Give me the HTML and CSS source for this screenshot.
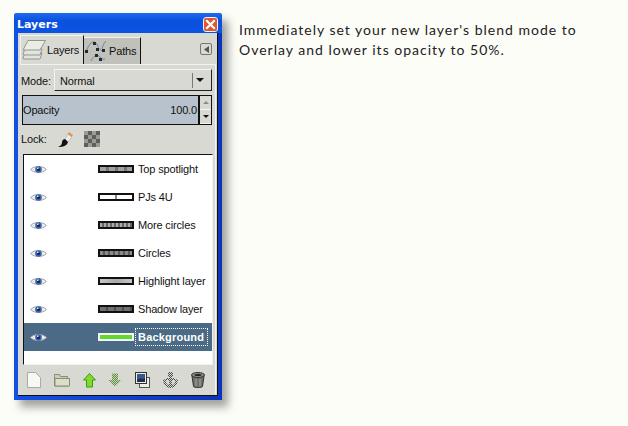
FILE: index.html
```html
<!DOCTYPE html>
<html lang="en">
<head>
<meta charset="utf-8">
<title>Layers</title>
<link rel="stylesheet" href="styles.css">
</head>
<body>
<svg class="defs" width="0" height="0" aria-hidden="true"><defs>
  <pattern id="dither" width="2" height="2" patternUnits="userSpaceOnUse"><rect width="2" height="2" fill="#d8d9d3"/><rect width="1" height="1" fill="#4c4d4a"/><rect x="1" y="1" width="1" height="1" fill="#4c4d4a"/></pattern>
  <pattern id="dither-green" width="2" height="2" patternUnits="userSpaceOnUse"><rect width="2" height="2" fill="#c8d4ba"/><rect width="1" height="1" fill="#5f8f45"/><rect x="1" y="1" width="1" height="1" fill="#5f8f45"/></pattern>
  <g id="eye-shape"><path d="M.5 5.500C4 1.500 13 1.500 16.500 5.500 13 9.500 4 9.500 .5 5.500z" fill="#e9ebee" stroke="#a4a8ae"/><circle cx="8.500" cy="5.500" r="3.300" fill="#3a62ac"/><circle cx="8.500" cy="5.500" r="1.500" fill="#12234a"/><rect x="7" y="3.500" width="1.500" height="1.500" fill="#d5e3ff"/></g>
</defs></svg>
<main class="page">
  <section class="window">
    <header class="titlebar">
      <span class="title">Layers</span>
      <span class="close"><svg width="13" height="13" viewBox="0 0 13 13"><path d="M3 3l7 7M10 3l-7 7" stroke="#fff" stroke-width="2.200" stroke-linecap="square"/></svg></span>
    </header>
    <div class="client">
      <div class="tabs">
        <div class="tab tab-active">
          <svg width="24" height="20" viewBox="0 0 24 20"><g fill="#e4e4de" stroke="#93958f"><path d="M3 13h17l-2 6H1.500L1 18z"/><path d="M3 9h17l-2 6H1.500L1 14z"/><path d="M6 .5h17.500L18 10H1z" fill="#ecece7"/></g></svg>
          <span>Layers</span>
        </div>
        <div class="tab tab-idle">
          <svg width="24" height="24" viewBox="0 0 24 24"><path d="M1 13C4 4 8 1 11 4s1 6 7 8M6 22c2-5 6-7 8-5s4 4 6 3M17 10c1-4 2-6 4-8" fill="none" stroke="#6b86ad"/><g fill="#26282c"><rect x="0" y="11" width="3" height="3"/><rect x="8" y="3" width="3" height="3"/><rect x="11" y="9" width="3" height="3"/><rect x="17" y="10" width="3" height="3"/><rect x="10" y="15" width="3" height="3"/><rect x="14" y="19" width="3" height="3"/></g></svg>
          <span>Paths</span>
        </div>
        <button class="menu-btn" aria-label="Menu"><svg width="7" height="7" viewBox="0 0 7 7"><path d="M6 0v7L1 3.500z" fill="#555"/></svg></button>
      </div>
      <div class="panel">
        <div class="mode-row">
          <span class="label">Mode:</span>
          <div class="combo"><span class="combo-value">Normal</span><span class="combo-arrow"></span></div>
        </div>
        <div class="opacity-row">
          <div class="opacity"><span>Opacity</span><span>100.0</span></div>
          <div class="spin"><span class="spin-btn spin-up"></span><span class="spin-btn spin-down"></span></div>
        </div>
        <div class="lock-row">
          <span class="label">Lock:</span>
          <svg class="brush" width="17" height="17" viewBox="0 0 17 17"><path d="M10 3l4 3-4 5-3-3z" fill="#ecece8" stroke="#a0a09a" stroke-width=".5"/><path d="M11 1l4 3-1.500 2-4-3z" fill="#d99a5e"/><path d="M7 8l3 3c-1 4-5 5-10 5 3-1 4-3 4-5s2-3 3-3z" fill="#111"/></svg>
          <span class="checker"></span>
        </div>
        <ul class="layers">
          <li class="layer"><svg class="eye" width="17" height="11" viewBox="0 0 17 11"><use href="#eye-shape"/></svg><span class="thumb thumb-dark"></span><span class="name">Top spotlight</span></li>
          <li class="layer"><svg class="eye" width="17" height="11" viewBox="0 0 17 11"><use href="#eye-shape"/></svg><span class="thumb thumb-white"></span><span class="name">PJs 4U</span></li>
          <li class="layer"><svg class="eye" width="17" height="11" viewBox="0 0 17 11"><use href="#eye-shape"/></svg><span class="thumb thumb-dots"></span><span class="name">More circles</span></li>
          <li class="layer"><svg class="eye" width="17" height="11" viewBox="0 0 17 11"><use href="#eye-shape"/></svg><span class="thumb thumb-mid"></span><span class="name">Circles</span></li>
          <li class="layer"><svg class="eye" width="17" height="11" viewBox="0 0 17 11"><use href="#eye-shape"/></svg><span class="thumb thumb-light"></span><span class="name">Highlight layer</span></li>
          <li class="layer"><svg class="eye" width="17" height="11" viewBox="0 0 17 11"><use href="#eye-shape"/></svg><span class="thumb thumb-shadow"></span><span class="name">Shadow layer</span></li>
          <li class="layer layer-selected"><svg class="eye" width="17" height="11" viewBox="0 0 17 11"><use href="#eye-shape"/></svg><span class="thumb thumb-green"></span><span class="name">Background</span></li>
        </ul>
        <div class="toolbar">
          <svg width="14" height="16" viewBox="0 0 14 16"><path d="M.5.500h8l5 5v10H.5z" fill="#f7f7f3" stroke="#a9aaa4"/></svg>
          <svg width="16" height="14" viewBox="0 0 16 14"><path d="M.5 13V1.500h5l1 2h7v2h2l-1 7.500z" fill="#cdcfb4" stroke="#8a8c78"/><path d="M1 5.500h14.500V13H1z" fill="#dcdec6" stroke="#8a8c78"/></svg>
          <svg width="13" height="15" viewBox="0 0 13 15"><path d="M6.500.5l6 6.500H9.500v7h-6V7H.5z" fill="#7fd92f" stroke="#3f9a10"/></svg>
          <svg width="14" height="14" viewBox="0 0 14 14"><path d="M4 .5h6V7h3.500L7 13.500.5 7H4z" fill="url(#dither-green)"/></svg>
          <svg width="15" height="16" viewBox="0 0 15 16"><rect x="4.500" y="5.500" width="10" height="10" fill="#ecece8" stroke="#555"/><rect x=".5" y=".5" width="11" height="11" fill="#ecece8" stroke="#333"/><rect x="2" y="2" width="8" height="8" fill="#3a5a8c"/><path d="M2 8l3-2 2 1 3-1v4H2z" fill="#1e2f4f"/></svg>
          <svg width="15" height="16" viewBox="0 0 15 16"><path d="M5 0h5v4H9v2h3v2H9v5c2 0 3-2 3-4l-1-1 4-1c0 5-3 9-7.500 9S0 12 0 7l4 1-1 1c0 2 1 4 3 4V8H3V6h3V4H5z" fill="url(#dither)"/></svg>
          <svg width="14" height="16" viewBox="0 0 14 16"><path d="M1 4l1.500 10.500c1 1.500 8 1.500 9 0L13 4z" fill="#6f706c" stroke="#333"/><path d="M5 7v7M9 7v7" stroke="#a8a8a4"/><ellipse cx="7" cy="3" rx="6.500" ry="2.500" fill="#8a8b87" stroke="#333"/><ellipse cx="7" cy="3" rx="3.500" ry="1" fill="#222"/></svg>
        </div>
      </div>
    </div>
  </section>
  <p class="note">Immediately set your new layer's blend mode to<br>Overlay and lower its opacity to 50%.</p>
</main>
</body>
</html>
```
FILE: styles.css
```css
* { box-sizing: border-box; }
html, body { margin: 0; padding: 0; }
body {
  width: 628px;
  height: 426px;
  overflow: hidden;
  background: #fdfdf8;
  font-family: "Liberation Sans", sans-serif;
  font-size: 11px;
  letter-spacing: -.15px;
  color: #111;
}
.page {
  display: flex;
  align-items: flex-start;
  padding: 13px 0 0 14px;
  gap: 17px;
}
.window {
  width: 208px;
  height: 387px;
  flex: none;
  display: flex;
  flex-direction: column;
  background: linear-gradient(90deg, #1450e4, #0c34b8);
  border-radius: 3px 3px 0 0;
  box-shadow: 6px 7px 8px rgba(70, 70, 70, .5);
}
.titlebar {
  height: 20px;
  flex: none;
  display: flex;
  align-items: center;
  justify-content: space-between;
  padding: 2px 5px 0 3px;
  background: linear-gradient(#1f6cf0, #0a50dc 40%, #0b55e4);
  border-radius: 3px 3px 0 0;
}
.title {
  font-family: "DejaVu Sans", sans-serif;
  font-weight: 700;
  font-size: 11px;
  letter-spacing: 0;
  color: #fff;
}
.close {
  width: 13px;
  height: 13px;
  display: flex;
  background: #e2562f;
  border-radius: 2px;
  outline: 1px solid #f4f4f4;
}
.client {
  flex: 1;
  margin: 0 4px 4px;
  padding: 2px 1px 0 2px;
  display: flex;
  flex-direction: column;
  background: #d8d9d3;
  border-right: 1px solid #111;
  border-bottom: 1px solid #111;
}
.tabs {
  height: 29px;
  flex: none;
  display: flex;
  align-items: flex-end;
}
.tab {
  display: flex;
  align-items: center;
  border-top: 1px solid #f2f2ee;
  border-right: 1px solid #111;
}
.tab-active {
  width: 64px;
  height: 29px;
  gap: 1px;
  padding: 0 0 0 1px;
  border-left: 1px solid #f2f2ee;
}
.tab-idle {
  width: 57px;
  height: 27px;
  gap: 0;
  padding-left: 1px;
  background: #c0c1ba;
}
.menu-btn {
  width: 12px;
  height: 12px;
  margin: 0 4px 9px auto;
  padding: 0;
  display: flex;
  align-items: center;
  justify-content: center;
  background: #d8d9d3;
  border: 1px solid #77786f;
  border-radius: 2px;
}
.panel {
  flex: 1;
  display: flex;
  flex-direction: column;
  padding: 4px 3px 0 1px;
  border-top: 1px solid #f2f2ee;
  border-right: 1px solid #f2f2ee;
}
.mode-row {
  height: 22px;
  flex: none;
  display: flex;
  align-items: center;
  gap: 3px;
}
.label { width: 30px; flex: none; }
.mode-row .label, .combo-value { padding-top: 2px; }
.combo {
  flex: 1;
  height: 22px;
  display: flex;
  align-items: center;
  justify-content: space-between;
  padding-left: 5px;
  background: #d8d9d3;
  border-top: 1px solid #f4f4f0;
  border-left: 1px solid #f4f4f0;
  border-right: 1px solid #222;
  border-bottom: 1px solid #222;
}
.combo-arrow {
  width: 19px;
  height: 15px;
  display: flex;
  border-left: 1px solid #777;
}
.combo-arrow::after {
  content: "";
  margin: 5px 0 0 3px;
  width: 0;
  height: 0;
  border-left: 4px solid transparent;
  border-right: 4px solid transparent;
  border-top: 4px solid #111;
}
.opacity-row {
  height: 30px;
  flex: none;
  margin: 4px 0 0 1px;
  display: flex;
}
.opacity {
  flex: 1;
  display: flex;
  align-items: center;
  justify-content: space-between;
  padding: 0 1px 0 0;
  background: #b8c2cc;
  border: 1px solid #111;
  border-right-width: 2px;
}
.spin {
  width: 12px;
  flex: none;
  display: flex;
  flex-direction: column;
  background: #d8d9d3;
  border: 1px solid #111;
  border-left: 0;
}
.spin-btn {
  flex: 1;
  display: flex;
  align-items: center;
  justify-content: center;
  border-bottom: 1px solid #f4f4f0;
}
.spin-btn::after {
  content: "";
  border-left: 3px solid transparent;
  border-right: 3px solid transparent;
}
.spin-up::after { border-bottom: 3px solid #8a8b85; }
.spin-down::after { border-top: 3px solid #111; }
.lock-row {
  height: 22px;
  flex: none;
  margin-top: 3px;
  display: flex;
  align-items: center;
}
.lock-row .label { width: 37px; }
.checker {
  width: 16px;
  height: 16px;
  margin-left: 9px;
  background: repeating-conic-gradient(#5e5f5c 0 25%, #9a9b97 0 50%) 0 0 / 8px 8px;
}
.layers {
  list-style: none;
  width: 190px;
  height: 211px;
  flex: none;
  margin: 4px 0 0 2px;
  padding: 0;
  background: #fff;
  border-top: 1px solid #111;
  border-left: 1px solid #111;
  border-right: 1px solid #f0f0ec;
  border-bottom: 1px solid #f0f0ec;
}
.layer {
  height: 28px;
  display: flex;
  align-items: center;
  padding-left: 6px;
  color: #111;
}
.eye { flex: none; }
.thumb {
  width: 36px;
  height: 8px;
  flex: none;
  margin-left: 51px;
  border: 2px solid #111;
  background: #888;
}
.thumb-dark { background: repeating-linear-gradient(90deg, #a0a0a0 0 6px, #747474 6px 9px); }
.thumb-white { background: linear-gradient(90deg, #fff 0 48%, #888 48% 52%, #fff 52%); }
.thumb-dots { background: repeating-linear-gradient(90deg, #aaa 0 2px, #666 2px 4px); }
.thumb-mid { background: repeating-linear-gradient(90deg, #8c8c8c 0 3px, #5c5c5c 3px 5px); }
.thumb-light { background: linear-gradient(90deg, #c8c8c8, #a8a8a8 50%, #c8c8c8); }
.thumb-shadow { background: repeating-linear-gradient(90deg, #707070 0 6px, #505050 6px 8px); }
.thumb-green { background: #62d82c; border-color: #f4f6f8; }
.name { margin-left: 4px; white-space: nowrap; }
.layer-selected {
  background: #4a6a85;
  color: #fff;
}
.layer-selected .name {
  width: 73px;
  margin-left: 1px;
  padding: 2px 2px;
  font-weight: 700;
  letter-spacing: .2px;
  border: 1px dotted #fff;
}
.toolbar {
  flex: 1;
  display: flex;
  align-items: center;
  justify-content: space-between;
  padding: 0 7px 0 6px;
}
.note {
  margin: 7px 0 0;
  font-family: "Lato", sans-serif;
  font-weight: 400;
  font-size: 14px;
  line-height: 20px;
  letter-spacing: 1px;
  color: #222;
  white-space: nowrap;
}
.defs { position: absolute; }
```
